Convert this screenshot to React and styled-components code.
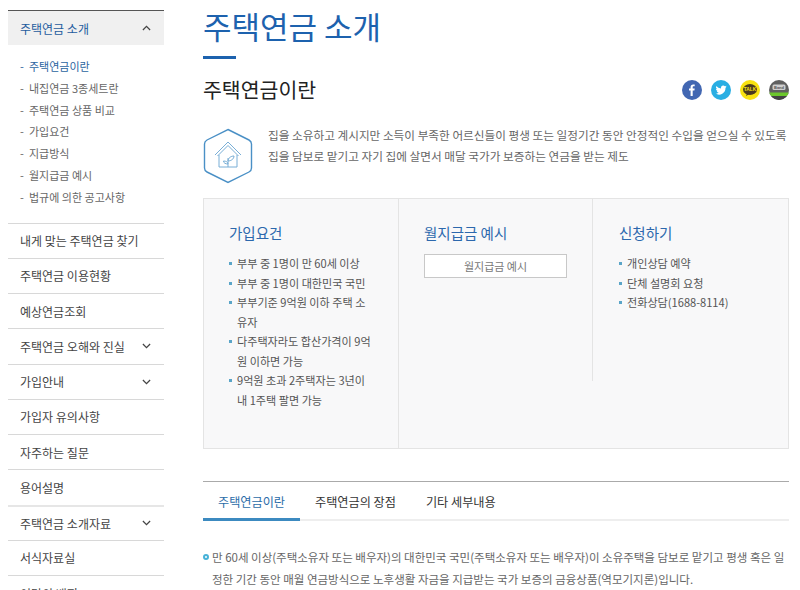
import React from "react";
import styled, { createGlobalStyle } from "styled-components";

const GlobalStyle = createGlobalStyle`
  html, body {
    margin: 0;
    padding: 0;
    background: #fff;
  }
  body {
    font-family: "Noto Sans CJK KR", "Noto Sans", sans-serif;
    color: #555;
  }
  ul {
    list-style: none;
    margin: 0;
    padding: 0;
  }
`;

const Page = styled.div`
  display: flex;
  width: 800px;
  height: 590px;
  overflow: hidden;
  padding: 10px 11px 0 8px;
  box-sizing: border-box;
`;

const Sidebar = styled.nav`
  width: 156px;
  flex: none;
  margin-right: 39px;
`;

const SideHead = styled.div`
  display: flex;
  align-items: center;
  justify-content: space-between;
  height: 35px;
  padding: 0 13px 0 12px;
  box-sizing: border-box;
  border-top: 1px solid #555;
  background: #f0f0f0;
  color: #1f5c9e;
  font-size: 12px;
`;

const SubMenu = styled.ul`
  padding: 11px 12px 14px;
`;

const SubItem = styled.li`
  height: 21.8px;
  line-height: 21.8px;
  font-size: 11px;
  color: ${(p) => (p.$active ? "#2b649f" : "#666")};
  white-space: nowrap;
  &::before {
    content: "-";
    display: inline-block;
    width: 9px;
  }
`;

const SideItem = styled.div`
  display: flex;
  align-items: center;
  justify-content: space-between;
  height: 35.25px;
  padding: 0 13px 0 12px;
  box-sizing: border-box;
  border-top: ${(p) => (p.$thick ? "2px solid #e6e6e6" : "1px solid #d8d8d8")};
  font-size: 12px;
  color: #444;
  white-space: nowrap;
`;

const Main = styled.main`
  width: 586px;
  flex: none;
`;

const Title = styled.h1`
  margin: 0;
  height: 33px;
  font-size: 31px;
  line-height: 32px;
  font-weight: 400;
  color: #1d62ae;
`;

const TitleBar = styled.div`
  width: 33px;
  height: 3px;
  margin-top: 13px;
  background: #1d62ae;
`;

const HeadRow = styled.div`
  display: flex;
  align-items: center;
  justify-content: space-between;
  margin-top: 16px;
  height: 28px;
`;

const SubTitle = styled.h2`
  margin: 0;
  font-size: 20.5px;
  line-height: 28px;
  font-weight: 400;
  color: #222;
`;

const Share = styled.div`
  display: flex;
  gap: 9px;
  margin-top: 2px;
`;

const Intro = styled.div`
  display: flex;
  gap: 15px;
  margin-top: 25px;
  height: 70px;
`;

const IntroText = styled.p`
  margin: -4px 0 0;
  font-size: 11.65px;
  line-height: 21px;
  color: #666;
  white-space: nowrap;
`;

const Panel = styled.div`
  display: grid;
  grid-template-columns: 195px 194px 1fr;
  height: 251px;
  border: 1px solid #e4e4e4;
  box-sizing: border-box;
  background: #f8f8f9;
`;

const Column = styled.section`
  padding: 23px 25px 0 ${(p) => (p.$last ? "26px" : "25px")};
  box-sizing: border-box;
  border-right: ${(p) => (p.$last ? "none" : "1px solid #e4e4e4")};
  height: ${(p) => p.$height || "auto"};
`;

const ColTitle = styled.h3`
  margin: 0 0 10px;
  font-size: 14.5px;
  line-height: 22px;
  font-weight: 400;
  color: #2c68ad;
`;

const InfoItem = styled.li`
  position: relative;
  padding-left: 8px;
  font-size: 11.1px;
  line-height: 19.5px;
  color: #555;
  &::before {
    content: "";
    position: absolute;
    left: 0;
    top: 8px;
    width: 3px;
    height: 3px;
    background: #5aa5c8;
  }
`;

const OutlineButton = styled.button`
  display: block;
  width: 143px;
  height: 24px;
  padding: 0;
  border: 1px solid #c8c8c8;
  background: #fff;
  font-family: inherit;
  font-size: 11px;
  color: #777;
`;

const Tabs = styled.div`
  display: flex;
  height: 40px;
  margin-top: 32px;
  border-top: 1px solid #aaa;
  border-bottom: 2px solid #eee;
  box-sizing: border-box;
`;

const Tab = styled.div`
  height: 39px;
  margin-bottom: -2px;
  padding: 0 15px;
  line-height: 39px;
  box-sizing: border-box;
  font-size: 12.15px;
  color: ${(p) => (p.$active ? "#2b6ca8" : "#333")};
  border-bottom: ${(p) => (p.$active ? "3px solid #3c8ac0" : "none")};
  white-space: nowrap;
`;

const Body = styled.p`
  position: relative;
  margin: 25px 0 0;
  padding-left: 9px;
  font-size: 11.5px;
  line-height: 22px;
  color: #666;
  word-break: break-all;
  &::before {
    content: "";
    position: absolute;
    left: 0;
    top: 8px;
    width: 2px;
    height: 2px;
    border: 2px solid #47b2d8;
    border-radius: 50%;
  }
`;

const Chevron = ({ up }) => (
  <svg width="9" height="6" viewBox="0 0 10 6" fill="none" stroke="#444" strokeWidth="1.4">
    <path d={up ? "M1 5.2 L5 1.2 L9 5.2" : "M1 .8 L5 4.8 L9 .8"} />
  </svg>
);

const Facebook = () => (
  <svg width="20" height="20" viewBox="0 0 20 20">
    <circle cx="10" cy="10" r="10" fill="#4267b2" />
    <path d="M8.600 16V10.600H7V8.600h1.600V7.200C8.600 5.400 9.600 4.400 11.200 4.400c.7 0 1.300.1 1.500.1v1.800h-1c-.8 0-1 .4-1 1v1.300h2l-.3 2h-1.700V16z" fill="#fff" />
  </svg>
);

const Twitter = () => (
  <svg width="20" height="20" viewBox="0 0 20 20">
    <circle cx="10" cy="10" r="10" fill="#29aee3" />
    <path d="M15.600 6.600c-.4.2-.8.3-1.300.4.5-.3.8-.7 1-1.200-.4.3-.9.4-1.400.5a2.300 2.300 0 0 0-3.900 2.100A6.400 6.400 0 0 1 5.300 6a2.300 2.300 0 0 0 .7 3c-.4 0-.7-.1-1-.3 0 1.100.8 2 1.800 2.300-.3.1-.7.1-1 0 .3.900 1.100 1.600 2.100 1.600a4.600 4.600 0 0 1-3.400 1 6.500 6.500 0 0 0 10-5.800c.5-.3.800-.7 1.100-1.200z" fill="#fff" />
  </svg>
);

const Kakao = () => (
  <svg width="20" height="20" viewBox="0 0 20 20">
    <circle cx="10" cy="10" r="10" fill="#f8e210" />
    <ellipse cx="10" cy="9.500" rx="7" ry="5.400" fill="#4a3a1e" />
    <path d="M7 13l-1 3 3.500-2z" fill="#4a3a1e" />
    <text x="10" y="11.300" textAnchor="middle" fontSize="4.800" fontWeight="700" fontFamily="Liberation Sans, sans-serif" fill="#f8e210">TALK</text>
  </svg>
);

const Band = () => (
  <svg width="20" height="20" viewBox="0 0 20 20">
    <defs>
      <clipPath id="bandClip">
        <circle cx="10" cy="10" r="10" />
      </clipPath>
    </defs>
    <g clipPath="url(#bandClip)">
      <rect width="20" height="20" fill="#606060" />
      <rect y="12.500" width="20" height="3.500" fill="#6cc72c" />
      <rect y="16" width="20" height="4" fill="#444" />
      <rect x="3.500" y="4.500" width="13" height="5.500" rx="1.500" fill="#cfcfcf" />
      <text x="10" y="8.700" textAnchor="middle" fontSize="4" fontWeight="700" fontFamily="Liberation Sans, sans-serif" fill="#555">Band</text>
    </g>
  </svg>
);

const HouseBadge = () => (
  <svg width="50" height="56" viewBox="0 0 50 56" fill="none">
    <path d="M25 1.500 L46 12 Q48.500 13.300 48.500 16 V40 Q48.500 42.700 46 44 L25 54.500 L4 44 Q1.500 42.700 1.500 40 V16 Q1.500 13.300 4 12 Z" stroke="#4a90c6" strokeWidth="1.400" />
    <g stroke="#78aed6" strokeWidth="1">
      <path d="M12 27 L25 14 L38 27" />
      <path d="M14.500 28 L25 17.500 L35.500 28" />
      <path d="M16 27 V39 H34 V27" />
      <path d="M25 39 V30 M25 33 C25 30 28 28 31 28 C31 31 28 33 25 33 M25 36 C25 34 23 33 20.500 33 C20.500 35 22.500 36 25 36" />
    </g>
  </svg>
);

const subMenu = ["주택연금이란", "내집연금 3종세트란", "주택연금 상품 비교", "가입요건", "지급방식", "월지급금 예시", "법규에 의한 공고사항"];

const sideItems = [
  { label: "내게 맞는 주택연금 찾기" },
  { label: "주택연금 이용현황" },
  { label: "예상연금조회" },
  { label: "주택연금 오해와 진실", more: true },
  { label: "가입안내", more: true },
  { label: "가입자 유의사항" },
  { label: "자주하는 질문" },
  { label: "용어설명" },
  { label: "주택연금 소개자료", more: true, thick: true },
  { label: "서식자료실" },
  { label: "이달의 배지" },
];

const requirements = [
  "부부 중 1명이 만 60세 이상",
  "부부 중 1명이 대한민국 국민",
  "부부기준 9억원 이하 주택 소유자",
  "다주택자라도 합산가격이 9억원 이하면 가능",
  "9억원 초과 2주택자는 3년이내 1주택 팔면 가능",
];

const applyList = ["개인상담 예약", "단체 설명회 요청", "전화상담(1688-8114)"];

export default function App() {
  return (
    <Page>
      <GlobalStyle />
      <Sidebar>
        <SideHead>
          주택연금 소개
          <Chevron up />
        </SideHead>
        <SubMenu>
          {subMenu.map((item, i) => (
            <SubItem key={item} $active={i === 0}>{item}</SubItem>
          ))}
        </SubMenu>
        {sideItems.map((item) => (
          <SideItem key={item.label} $thick={item.thick}>
            {item.label}
            {item.more && <Chevron />}
          </SideItem>
        ))}
      </Sidebar>
      <Main>
        <Title>주택연금 소개</Title>
        <TitleBar />
        <HeadRow>
          <SubTitle>주택연금이란</SubTitle>
          <Share>
            <Facebook />
            <Twitter />
            <Kakao />
            <Band />
          </Share>
        </HeadRow>
        <Intro>
          <HouseBadge />
          <IntroText>
            집을 소유하고 계시지만 소득이 부족한 어르신들이 평생 또는 일정기간 동안 안정적인 수입을 얻으실 수 있도록
            <br />
            집을 담보로 맡기고 자기 집에 살면서 매달 국가가 보증하는 연금을 받는 제도
          </IntroText>
        </Intro>
        <Panel>
          <Column>
            <ColTitle>가입요건</ColTitle>
            <ul>
              {requirements.map((item) => (
                <InfoItem key={item}>{item}</InfoItem>
              ))}
            </ul>
          </Column>
          <Column $height="182px">
            <ColTitle>월지급금 예시</ColTitle>
            <OutlineButton>월지급금 예시</OutlineButton>
          </Column>
          <Column $last>
            <ColTitle>신청하기</ColTitle>
            <ul>
              {applyList.map((item) => (
                <InfoItem key={item}>{item}</InfoItem>
              ))}
            </ul>
          </Column>
        </Panel>
        <Tabs>
          <Tab $active>주택연금이란</Tab>
          <Tab>주택연금의 장점</Tab>
          <Tab>기타 세부내용</Tab>
        </Tabs>
        <Body>
          만 60세 이상(주택소유자 또는 배우자)의 대한민국 국민(주택소유자 또는 배우자)이 소유주택을 담보로 맡기고 평생 혹은 일정한 기간 동안 매월 연금방식으로 노후생활 자금을 지급받는 국가 보증의 금융상품(역모기지론)입니다.
        </Body>
      </Main>
    </Page>
  );
}
